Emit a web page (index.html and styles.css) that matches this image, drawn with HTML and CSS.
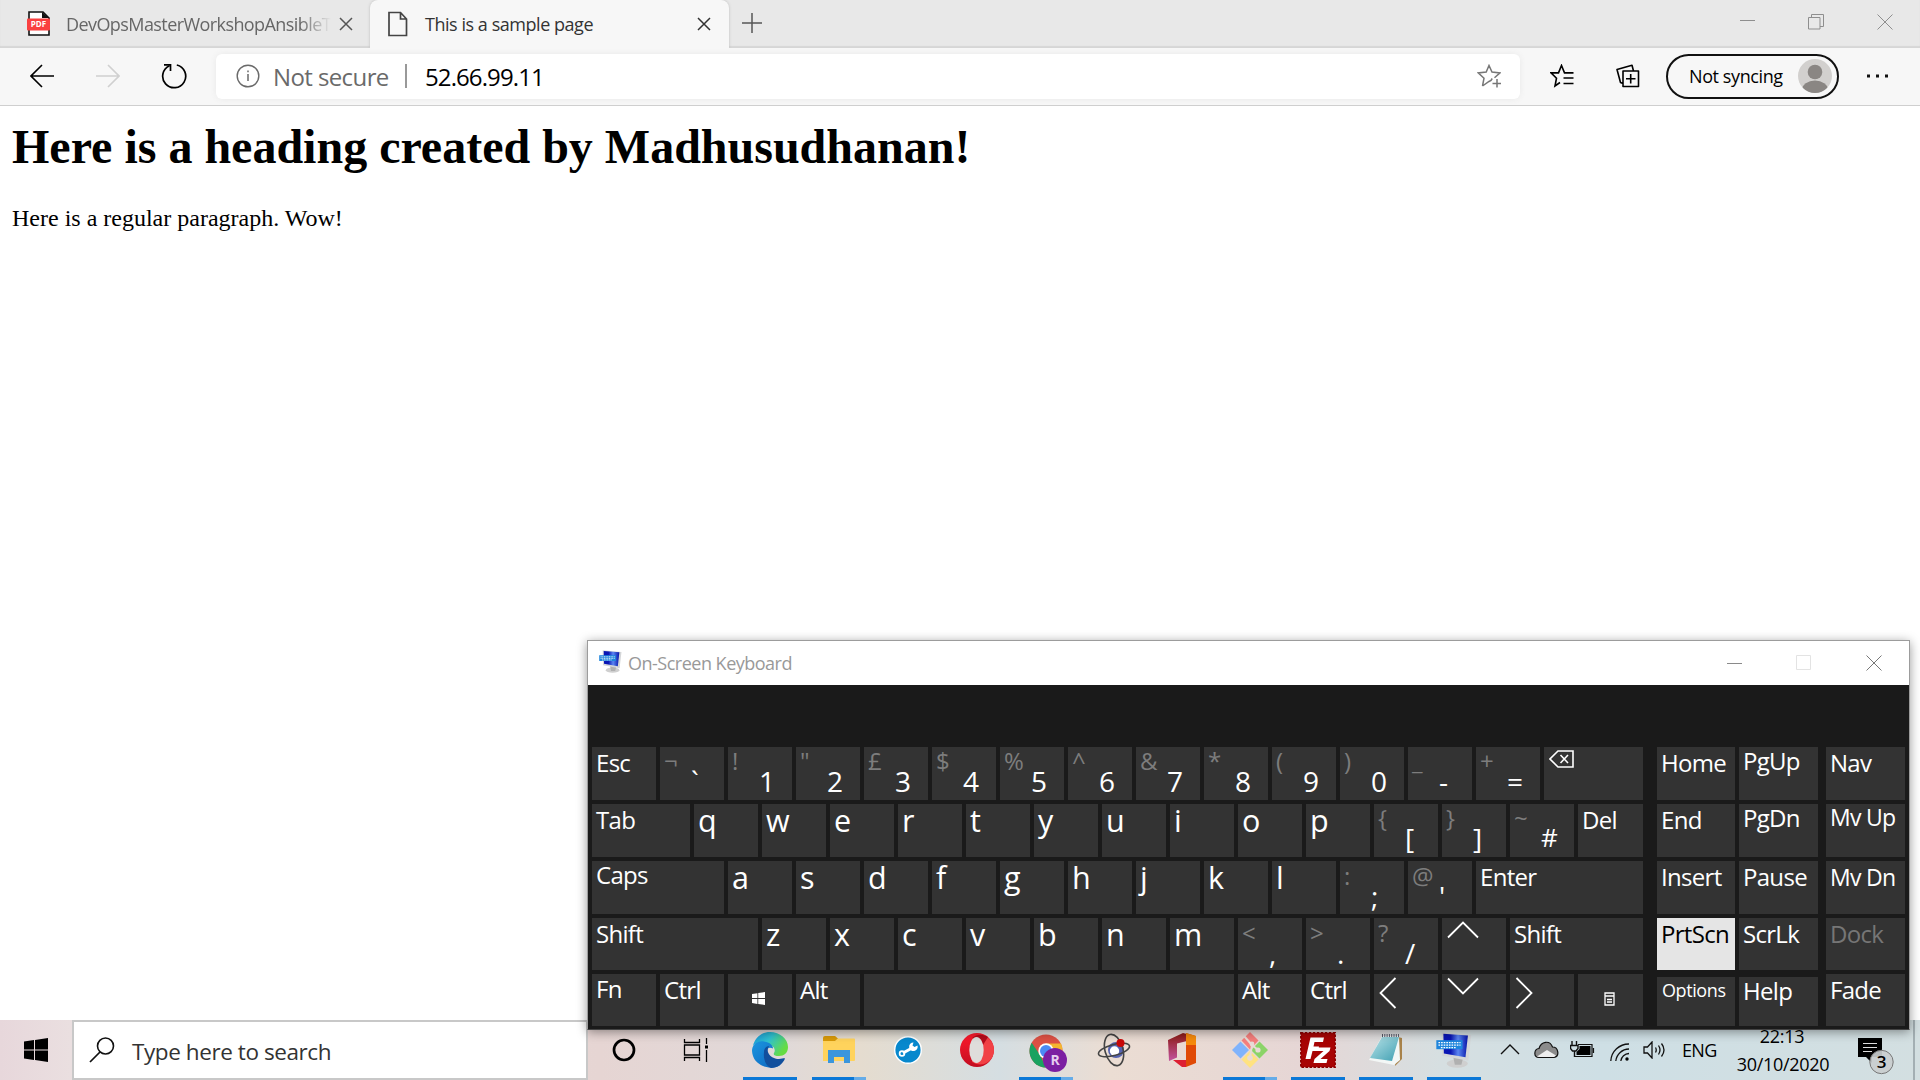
FILE: index.html
```html
<!DOCTYPE html>
<html lang="en">
<head>
<meta charset="utf-8">
<title>This is a sample page</title>
<link rel="stylesheet" href="styles.css">
</head>
<body>
<header class="tabs">
  <div class="tab tab-idle">
    <svg width="24" height="26" viewBox="0 0 24 26"><path d="M2 1h14l6 6v17H2z" fill="#fff" stroke="#111" stroke-width="1.6"/><path d="M15 1v6h7z" fill="#111"/><rect x="0" y="7.500" width="23" height="12" rx="1" fill="#fa4040"/><text x="11.500" y="16.400" text-anchor="middle" class="pdf">PDF</text></svg>
    <span class="tab-title fade">DevOpsMasterWorkshopAnsibleT</span>
    <svg class="x" width="14" height="14" viewBox="0 0 14 14"><path d="M1 1l12 12M13 1L1 13" stroke="#555" stroke-width="1.5"/></svg>
  </div>
  <div class="tab tab-active">
    <svg width="22" height="26" viewBox="0 0 22 26"><path d="M2 1.500h11.500l6 6.500v16.500H2zM13.500 1.500v6.500h6" fill="none" stroke="#444" stroke-width="1.700"/></svg>
    <span class="tab-title">This is a sample page</span>
    <svg class="x" width="14" height="14" viewBox="0 0 14 14"><path d="M1 1l12 12M13 1L1 13" stroke="#333" stroke-width="1.500"/></svg>
  </div>
  <svg class="plus" width="20" height="20" viewBox="0 0 20 20"><path d="M10 0v20M0 10h20" stroke="#555" stroke-width="1.500"/></svg>
  <div class="win-buttons">
    <svg width="15" height="15" viewBox="0 0 15 15"><path d="M0 6.500h15" stroke="#8e8e8e"/></svg>
    <svg width="16" height="16" viewBox="0 0 16 16"><path d="M.5 3.500h11.500v11.500H.5zM3.500 3.500V.5h12v12H12" fill="none" stroke="#8e8e8e"/></svg>
    <svg width="16" height="16" viewBox="0 0 16 16"><path d="M.5.5l15 15M15.500.5l-15 15" stroke="#8e8e8e"/></svg>
  </div>
</header>

<nav class="toolbar">
  <svg class="back" width="24" height="24" viewBox="0 0 24 24"><path d="M24 12H1M12 1L1 12l11 11" fill="none" stroke="#000" stroke-width="1.600"/></svg>
  <svg class="forward" width="24" height="24" viewBox="0 0 24 24"><path d="M0 12h23M12 1l11 11-11 11" fill="none" stroke="#d0d0d0" stroke-width="1.600"/></svg>
  <svg class="reload" width="26" height="26" viewBox="0 0 26 26"><path d="M15.800 2A11.500 11.500 0 1 1 8.500 2.700" fill="none" stroke="#000" stroke-width="1.700"/><path d="M3 1.800h6.500V8" fill="none" stroke="#000" stroke-width="1.700"/></svg>
  <div class="address">
    <svg width="24" height="24" viewBox="0 0 24 24"><circle cx="12" cy="12" r="10.800" fill="none" stroke="#6a6a6a" stroke-width="1.400"/><path d="M12 10v7M12 6.500v1.800" stroke="#6a6a6a" stroke-width="1.500"/></svg>
    <span class="insecure">Not secure</span>
    <span class="divider"></span>
    <span class="url">52.66.99.11</span>
    <svg class="star" width="24" height="24" viewBox="0 0 24 24"><path d="M5.500 22L7 14.200 1.200 8.900l8-.8L12 1.500l3 6.600 8 .8-5.500 4.900M15.200 14.500l-1.200 2-2 1-6.500 4.500M20 15v8.500M15.500 19.500H24" fill="none" stroke="#777" stroke-width="1.500"/></svg>
  </div>
  <svg class="favs" width="24" height="24" viewBox="0 0 24 24"><path d="M23.500 8.900H14.500L11.500 1.500 8.500 8.900H1l5.500 5.300L5 22l5-3.500M13.500 14H23.500M13.500 19.500H23.500" fill="none" stroke="#000" stroke-width="1.600"/></svg>
  <svg class="collections" width="24" height="24" viewBox="0 0 24 24"><path d="M7 7h15.500v15.500H7zM14.700 10v9.500M10 14.700h9.500M7 19.500L4.500 18.500 1 5.500 16 1.300 17.500 7" fill="none" stroke="#000" stroke-width="1.600" stroke-linejoin="round"/></svg>
  <div class="profile">
    <span>Not syncing</span>
    <svg width="34" height="34" viewBox="0 0 34 34"><defs><clipPath id="face"><circle cx="17" cy="17" r="17"/></clipPath></defs><g clip-path="url(#face)"><rect width="34" height="34" fill="#d2d0ce"/><circle cx="17" cy="13" r="7.300" fill="#8a8683"/><ellipse cx="17" cy="31" rx="13" ry="9.500" fill="#8a8683"/></g></svg>
  </div>
  <svg class="more" width="22" height="4" viewBox="0 0 22 4"><path d="M0 .5h3v3H0zM9 .5h3v3H9zM18 .5h3v3h-3z" fill="#111"/></svg>
</nav>

<main class="page">
  <h1>Here is a heading created by Madhusudhanan!</h1>
  <p>Here is a regular paragraph. Wow!</p>
</main>

<footer class="taskbar">
  <div class="start"><svg width="24" height="24" viewBox="0 0 24 24"><path d="M0 3.500L10 2.100v9.400H0zM11 1.900L24 0v11.500H11zM0 12.500h10v9.400L0 20.500zM11 12.500h13V24l-13-1.900z"/></svg></div>
  <div class="search">
    <svg width="26" height="26" viewBox="0 0 26 26"><circle cx="16.500" cy="9" r="8" fill="none" stroke="#111" stroke-width="1.600"/><path d="M11 15L1 25" stroke="#111" stroke-width="1.700"/></svg>
    <span>Type here to search</span>
  </div>
  <div class="slot cortana"><svg width="24" height="24" viewBox="0 0 24 24"><circle cx="12" cy="12" r="10" fill="none" stroke="#000" stroke-width="2.700"/></svg></div>
  <div class="slot view"><svg width="26" height="24" viewBox="0 0 26 24"><path d="M1.500 1v3.500h15V1M1.500 23v-3.500h15V23M1.500 7h15v10h-15zM23.500 0v6M23.500 12v12" fill="none" stroke="#000" stroke-width="1.300"/><path d="M22 7.500h3v3h-3z"/></svg></div>
  <div class="slot wide open"><svg width="36" height="36" viewBox="0 0 36 36"><defs><linearGradient id="eg" x1="0" y1="0" x2="1" y2=".5"><stop offset="0" stop-color="#1690d8"/><stop offset=".5" stop-color="#30c2d0"/><stop offset="1" stop-color="#65dc42"/></linearGradient><linearGradient id="eb" x1="0" y1="0" x2="1" y2="1"><stop offset="0" stop-color="#1b96df"/><stop offset="1" stop-color="#0c62be"/></linearGradient></defs><path d="M1 14C3 5 10 0 18 0c10 0 18 7 18 15 0 6-4 9-9 9-4 0-6-1-5-3 2-3 0-8-6-8C9 9 4 10 1 14z" fill="url(#eg)"/><path d="M0 18C1 11 7 8.500 12 9.500c6 1 9 4 9 7-7-3-7 4-4 9 3 5 8 7 12 7C22 38 12 36 6 31 2 28 0 23 0 18z" fill="url(#eb)"/><path d="M12 20c0-4 3-6 5-6-4 6 2 13 10 13 3 0 5-1 6-.5C31 32 25 36 19 36c-5-2-8-9-7-16z" fill="#114f9d"/></svg></div>
  <div class="slot wide open stacked"><svg width="32" height="28" viewBox="0 0 32 28"><path d="M0 2q0-2 2-2h10l3 2.500-3 3H0z" fill="#d99a08"/><path d="M0 5h12l3-2.500h16q1 0 1 1V24q0 1-1 1H0z" fill="#ffd35c"/><path d="M5 27V14h22v13h-6v-6H11v6z" fill="#3b96dc"/></svg></div>
  <div class="slot wide"><svg width="28" height="28" viewBox="0 0 28 28"><circle cx="14" cy="14" r="13.300" fill="#0788cd" stroke="#fff" stroke-width="1.400"/><path d="M9 17L19 11.500" stroke="#fff" stroke-width="3"/><circle cx="8" cy="17.500" r="2.400" fill="none" stroke="#fff" stroke-width="1.700"/><path d="M23.500 9.500A4.300 4.300 0 1 1 19.500 6.500L18.500 9.500l2 1.500z" fill="#fff"/></svg></div>
  <div class="slot wide"><svg width="34" height="34" viewBox="0 0 34 34"><defs><linearGradient id="op" x2="0" y2="1"><stop stop-color="#ff1b2d"/><stop offset="1" stop-color="#c20d20"/></linearGradient></defs><ellipse cx="17" cy="17" rx="17" ry="17" fill="url(#op)"/><path d="M12 5C24-2 34 7 34 17S24 36 12 29z" fill="#f14145"/><path d="M12 5C18 0 24 2 28 4L23 12z" fill="#b40b1b"/><ellipse cx="16.500" cy="17" rx="7.200" ry="13" fill="#dfdddb"/></svg></div>
  <div class="slot open stacked chrome"><svg width="38" height="38" viewBox="0 0 38 38"><circle cx="17" cy="17" r="16.500" fill="#dd5144"/><path d="M17 17h16.500A16.500 16.500 0 0 1 17 33.500z" fill="#ffcd46"/><path d="M17 9.500H32A16.500 16.500 0 0 1 33.500 17H17z" fill="#f4b530"/><path d="M2.700 8.800L11 21l6 12.500A16.500 16.500 0 0 1 2.700 8.800z" fill="#1aa260"/><circle cx="17" cy="17" r="7.700" fill="#fff"/><circle cx="17" cy="17" r="6" fill="#4c8bf5"/><circle cx="26" cy="26" r="12" fill="#7b1fa2"/><text x="26" y="31" text-anchor="middle" class="avatar">R</text></svg></div>
  <div class="slot"><svg width="34" height="34" viewBox="0 0 34 34"><circle cx="19" cy="17" r="8" fill="#5663b0"/><circle cx="17.500" cy="18" r="4.700" fill="#fff"/><g fill="none" stroke="#444" stroke-width="1.600"><ellipse cx="17" cy="17" rx="16" ry="5.500" transform="rotate(-15 17 17)"/><ellipse cx="17" cy="17" rx="16" ry="9" transform="rotate(75 17 17)"/></g><circle cx="23.500" cy="10" r="4" fill="#c90808"/></svg></div>
  <div class="slot"><svg width="28" height="34" viewBox="0 0 28 34"><defs><linearGradient id="of" x2="0" y2="1"><stop stop-color="#8c1b12"/><stop offset="1" stop-color="#c353a0"/></linearGradient></defs><path d="M0 7L15 0l4 1v7l-10 2.500v14L1 28z" fill="url(#of)"/><path d="M18 0l10 3v27l-10 4z" fill="#e04a06"/><path d="M18 0l10 3v9H18z" fill="#f58a0c"/><path d="M5 27h13v7L14 34z" fill="#dd2033"/></svg></div>
  <div class="slot open stacked"><svg width="36" height="36" viewBox="0 0 36 36"><path d="M18 0l8.500 8.500-8.500 9-8.500-9z" fill="#f57f7d"/><path d="M8.500 9.500L17 18l-8.500 8.500L0 18z" fill="#80b3fc"/><path d="M27.500 9.500L36 18l-8.500 8.500L19 18z" fill="#8bd468"/><path d="M18 19l8.500 8.500L18 36l-8.500-8.500z" fill="#ffe280"/><path d="M12 4l8 9 6 5M20 13l-2 13" stroke="#e8dbd6" stroke-width="2" fill="none"/><circle cx="20" cy="12" r="2.400" fill="#e8dbd6"/><circle cx="26" cy="18" r="2.600" fill="#e8dbd6"/><circle cx="18" cy="26" r="2.800" fill="#e8dbd6"/></svg></div>
  <div class="slot open"><svg width="36" height="36" viewBox="0 0 36 36"><rect x=".8" y=".8" width="34.400" height="34.400" fill="#a80404" stroke="#8c0000" stroke-width="1.500" stroke-dasharray="2.500 1.500"/><path d="M10.500 5.500H24l-1 4.500h-8.500l-1 4.500H19l-1 4.500h-5.500L10.500 27H5.500zM18 15.500h12.500L29.500 19l-9 8h7l-1 4H13.500l1-4 9-8H17z" fill="#fff"/></svg></div>
  <div class="slot open"><svg width="34" height="34" viewBox="0 0 34 34"><defs><linearGradient id="np" x2="1" y2="1"><stop stop-color="#b9e3e8"/><stop offset="1" stop-color="#3f9fb2"/></linearGradient></defs><path d="M29 4l4 1v21l-7 7z" fill="#a8824a"/><path d="M13 3h17l1 24-6 5-25-5z" fill="#f3f7f6"/><path d="M13 4h17l-7 24-22-3z" fill="url(#np)"/><path d="M13 2.500h17" stroke="#556" stroke-width="3" stroke-dasharray="1 1.300"/></svg></div>
  <div class="slot open"><svg width="36" height="36" viewBox="0 0 22 22"><use href="#osk"/></svg></div>
  <div class="tray">
    <svg class="t-up" width="20" height="11" viewBox="0 0 20 11"><path d="M1 10l9-9 9 9" fill="none" stroke="#111" stroke-width="1.400"/></svg>
    <svg class="t-cloud" width="25" height="18" viewBox="0 0 25 18"><path d="M5 16.500C-1 16 0 8 5 7.500 7 0 16-1 18.500 6c6 0 7.500 9.500 1.500 10.500z" fill="#8b8b8b" stroke="#111" stroke-width="1.200"/><path d="M3 15.500l10-6.500 9 5.500-2 1.500H5z" fill="#eee"/></svg>
    <svg class="t-battery" width="25" height="18" viewBox="0 0 25 18"><path d="M2 0v4M6.500 0v4M.5 4.500h7.500v3l-2 2.500H2.500L.5 7.500zM4.500 10v6" fill="none" stroke="#111" stroke-width="1.400"/><path d="M8 3.500h14v12H5M23.500 7v5" fill="none" stroke="#111" stroke-width="1.200"/><path d="M9.500 5h11v9H6.500v-3l3-3z"/></svg>
    <svg class="t-wifi" width="20" height="20" viewBox="0 0 20 20"><path d="M.8 19A18 18 0 0 1 19 2M5.800 19A13.500 13.500 0 0 1 19 7M10.800 19a8.500 8.500 0 0 1 8.200-7.500" fill="none" stroke="#111" stroke-width="1.300"/><circle cx="17" cy="17" r="1.700"/></svg>
    <svg class="t-sound" width="23" height="18" viewBox="0 0 23 18"><path d="M1 6h3.500L9 1v16l-4.500-5H1zM12.500 6.500q1.500 2.500 0 5M15.500 4.500q3 4.500 0 9M18.500 2.500q5 6.500 0 13" fill="none" stroke="#111" stroke-width="1.300"/></svg>
    <span class="lang">ENG</span>
    <div class="clock"><span class="time">22:13</span><span class="date">30/10/2020</span></div>
    <svg class="t-note" width="36" height="38" viewBox="0 0 36 38"><path d="M0 0h24v19H14v6l-6-6H0z"/><path d="M5 5.500h14M5 9.500h14M5 13.500h9" stroke="#ddd" stroke-width="1.200"/><circle cx="23.500" cy="24" r="11.700" fill="#c9cdce" fill-opacity=".92" stroke="#777"/><text x="23.500" y="30" text-anchor="middle" class="badge">3</text></svg>
  </div>
  <div class="peek"></div>
</footer>

<section class="osk">
  <div class="osk-title">
    <svg width="23" height="23" viewBox="0 0 22 22"><defs><linearGradient id="scr" x2="1" y2="0"><stop stop-color="#0a16b4"/><stop offset=".3" stop-color="#0a16b4"/><stop offset=".6" stop-color="#5b86f2"/><stop offset="1" stop-color="#0512a8"/></linearGradient></defs><g id="osk"><ellipse cx="13" cy="19.300" rx="6.500" ry="2.500" fill="#cfcfcf"/><path d="M10.500 15l6 1-1 4h-4z" fill="#b0b0b0"/><path d="M3.500.3L21.500 2l-1.800 15.500L3.800 14.500z" fill="#d4d6d8"/><path d="M4.500 1L19.500 2.200 18 15.500 4.800 13.200z" fill="url(#scr)"/><rect x=".2" y="5" width="16" height="5.500" fill="#1f86dd"/><path d="M1.500 6.500h13.500M1.500 8h13.500M3 9.500h9" stroke="#fff" stroke-width=".8" stroke-dasharray="1 .6"/></g></svg>
    <span>On-Screen Keyboard</span>
    <div class="osk-buttons">
      <svg width="15" height="16" viewBox="0 0 15 16"><path d="M0 8.500h15" stroke="#8a8a8a"/></svg>
      <svg width="15" height="15" viewBox="0 0 15 15"><path d="M.5.5h14v14H.5z" fill="none" stroke="#e3e3e3"/></svg>
      <svg width="16" height="16" viewBox="0 0 16 16"><path d="M.5.5l15 15M15.500.5l-15 15" stroke="#777"/></svg>
    </div>
  </div>
  <div class="osk-body">
    <div class="block">
      <div class="row">
        <div class="key">Esc</div>
        <div class="key dual"><i>¬</i><b>`</b></div>
        <div class="key dual"><i>!</i><b>1</b></div>
        <div class="key dual"><i>"</i><b>2</b></div>
        <div class="key dual"><i>£</i><b>3</b></div>
        <div class="key dual"><i>$</i><b>4</b></div>
        <div class="key dual"><i>%</i><b>5</b></div>
        <div class="key dual"><i>^</i><b>6</b></div>
        <div class="key dual"><i>&amp;</i><b>7</b></div>
        <div class="key dual"><i>*</i><b>8</b></div>
        <div class="key dual"><i>(</i><b>9</b></div>
        <div class="key dual"><i>)</i><b>0</b></div>
        <div class="key dual"><i>_</i><b>-</b></div>
        <div class="key dual"><i>+</i><b>=</b></div>
        <div class="key grow"><svg class="bksp" width="25" height="18" viewBox="0 0 25 18"><path d="M9 1h15v16H9L1 9z" fill="none" stroke="#fff" stroke-width="1.600"/><path d="M11.500 5l7.500 8M19 5l-7.500 8" stroke="#fff" stroke-width="1.600"/></svg></div>
      </div>
      <div class="row">
        <div class="key tab-key">Tab</div>
        <div class="key ltr">q</div><div class="key ltr">w</div><div class="key ltr">e</div><div class="key ltr">r</div><div class="key ltr">t</div><div class="key ltr">y</div><div class="key ltr">u</div><div class="key ltr">i</div><div class="key ltr">o</div><div class="key ltr">p</div>
        <div class="key dual"><i>{</i><b>[</b></div>
        <div class="key dual"><i>}</i><b>]</b></div>
        <div class="key dual"><i>~</i><b class="raised">#</b></div>
        <div class="key grow">Del</div>
      </div>
      <div class="row">
        <div class="key caps-key">Caps</div>
        <div class="key ltr">a</div><div class="key ltr">s</div><div class="key ltr">d</div><div class="key ltr">f</div><div class="key ltr">g</div><div class="key ltr">h</div><div class="key ltr">j</div><div class="key ltr">k</div><div class="key ltr">l</div>
        <div class="key dual lower"><i>:</i><b>;</b></div>
        <div class="key dual lower"><i>@</i><b>'</b></div>
        <div class="key grow low">Enter</div>
      </div>
      <div class="row short">
        <div class="key shift-key low">Shift</div>
        <div class="key ltr">z</div><div class="key ltr">x</div><div class="key ltr">c</div><div class="key ltr">v</div><div class="key ltr">b</div><div class="key ltr">n</div><div class="key ltr">m</div>
        <div class="key dual lower"><i>&lt;</i><b>,</b></div>
        <div class="key dual lower"><i>&gt;</i><b>.</b></div>
        <div class="key dual lower"><i>?</i><b>/</b></div>
        <div class="key"><svg class="arrow" width="32" height="20" viewBox="0 0 32 20"><path d="M1 16.500l15-15 15 15" fill="none" stroke="#fff" stroke-width="1.800"/></svg></div>
        <div class="key grow low">Shift</div>
      </div>
      <div class="row short">
        <div class="key high">Fn</div>
        <div class="key low">Ctrl</div>
        <div class="key center"><svg width="13" height="13" viewBox="0 0 24 24"><path fill="#fff" d="M0 3.500L10 2.100v9.200H0zM11.500 1.900L24 0v11.300H11.500zM0 12.800h10v9.200L0 20.500zM11.500 12.800H24V24l-12.500-1.900z"/></svg></div>
        <div class="key low">Alt</div>
        <div class="key grow"></div>
        <div class="key low">Alt</div>
        <div class="key low">Ctrl</div>
        <div class="key"><svg class="arrow" width="18" height="32" viewBox="0 0 18 32"><path d="M16.500 1l-15 15 15 15" fill="none" stroke="#fff" stroke-width="1.800"/></svg></div>
        <div class="key"><svg class="arrow" width="32" height="20" viewBox="0 0 32 20"><path d="M1 1.500l15 15 15-15" fill="none" stroke="#fff" stroke-width="1.800"/></svg></div>
        <div class="key"><svg class="arrow" width="18" height="32" viewBox="0 0 18 32"><path d="M1.500 1l15 15-15 15" fill="none" stroke="#fff" stroke-width="1.800"/></svg></div>
        <div class="key menu-key center"><svg width="11" height="14" viewBox="0 0 11 14"><path d="M1 1h9v12H1zM1 4h9M3 7.500h5M3 10h5" fill="none" stroke="#fff" stroke-width="1.300"/></svg></div>
      </div>
    </div>
    <div class="block nav">
      <div class="row"><div class="key">Home</div><div class="key up">PgUp</div></div>
      <div class="row"><div class="key">End</div><div class="key up">PgDn</div></div>
      <div class="row"><div class="key low">Insert</div><div class="key low">Pause</div></div>
      <div class="row short"><div class="key low pressed">PrtScn</div><div class="key low">ScrLk</div></div>
      <div class="row short inset"><div class="key small">Options</div><div class="key up">Help</div></div>
    </div>
    <div class="block side">
      <div class="row"><div class="key">Nav</div></div>
      <div class="row"><div class="key up mid">Mv Up</div></div>
      <div class="row"><div class="key low mid">Mv Dn</div></div>
      <div class="row short"><div class="key low dim">Dock</div></div>
      <div class="row short"><div class="key low">Fade</div></div>
    </div>
  </div>
</section>
</body>
</html>
```
FILE: styles.css
```css
* { box-sizing: border-box; }

body {
  margin: 0;
  width: 1920px;
  height: 1080px;
  overflow: hidden;
  position: relative;
  display: flex;
  flex-direction: column;
  background: #fff;
  font-family: "Open Sans", "Noto Sans", sans-serif;
  color: #000;
}

svg { display: block; flex: none; }

/* Browser tabs */
.tabs {
  display: flex;
  height: 48px;
  background: #e8e8e8;
  box-shadow: inset 0 -2px 1px #d6d6d6;
}
.tab { display: flex; align-items: center; height: 48px; font-size: 18px; }
.tab-idle { width: 370px; padding: 0 17px 0 27px; color: #666; }
.tab-active {
  width: 359px;
  padding: 0 18px 0 17px;
  background: #f7f7f7;
  border-radius: 8px 8px 0 0;
  box-shadow: 0 0 3px #bbb;
  clip-path: inset(0 -4px 0 -4px);
  color: #333;
}
.tab-title { margin-left: 15px; padding-bottom: 1px; white-space: nowrap; letter-spacing: -0.58px; }
.tab-active .tab-title { margin-left: 16px; letter-spacing: -0.46px; }
.fade { -webkit-mask-image: linear-gradient(90deg, #000 88%, transparent); mask-image: linear-gradient(90deg, #000 88%, transparent); }
.x { margin-left: auto; }
.plus { margin: 13px 0 0 13px; }
.win-buttons { display: flex; gap: 53px; margin: 14px 27px 0 auto; }

/* Toolbar */
.toolbar {
  display: flex;
  align-items: center;
  height: 58px;
  padding-bottom: 1px;
  background: #f7f7f7;
  border-bottom: 1px solid #cfcfcf;
}
.back { margin-left: 30px; }
.forward { margin-left: 42px; }
.reload { margin-left: 41px; }
.address {
  display: flex;
  align-items: center;
  width: 1304px;
  height: 45px;
  margin-left: 29px;
  padding: 0 19px 0 20px;
  background: #fff;
  border-radius: 6px;
  box-shadow: 0 0 6px #e9e9e9;
  font-size: 24px;
}
.insecure { width: 115px; margin-left: 13px; color: #6a6a6a; letter-spacing: -0.6px; white-space: nowrap; }
.divider { width: 2px; height: 24px; margin: 0 18px 0 17px; background: #999; }
.url { letter-spacing: -0.9px; }
.insecure, .url { padding-top: 1px; }
.star { margin-left: auto; }
.favs { margin-left: 30px; }
.collections { margin-left: 42px; }
.profile {
  display: flex;
  align-items: center;
  justify-content: space-between;
  width: 173px;
  height: 45px;
  margin-left: 26px;
  padding: 0 5px 0 21px;
  border: 2px solid #111;
  border-radius: 23px;
  font-size: 18px;
  letter-spacing: -0.4px;
}
.profile span { padding-bottom: 1px; }
.more { margin-left: 28px; }

/* Page content */
.page { flex: 1; padding: 13px 12px 0; font-family: "Liberation Serif", serif; }
.page h1 { margin: 0; font-size: 48px; line-height: 55px; white-space: nowrap; }
.page p { margin: 30px 0 0; font-size: 24px; line-height: 28px; }

/* Taskbar */
.taskbar {
  display: flex;
  height: 60px;
  background: linear-gradient(90deg, #e7d7db 0, #eadfe0 70px, #e6d5d3 600px, #e0d9d9 780px, #e5dccf 860px, #d5dee2 1000px, #ebddd3 1110px, #e6d6d5 1300px, #d6dfe1 1440px, #cedfe5 1600px, #d3dfe1 1920px);
}
.start { width: 72px; padding: 18px 0 0 24px; }
.search {
  display: flex;
  width: 516px;
  padding: 15px 0 0 15px;
  background: #fff;
  border: 2px solid #c8c8c8;
  font-size: 22.5px;
  letter-spacing: -0.42px;
  color: #333;
}
.search span { margin-left: 17px; line-height: 30px; }
.slot { position: relative; width: 68px; display: flex; align-items: center; justify-content: center; }
.slot svg { margin-right: 1px; }
.wide { width: 69px; }
.cortana { width: 72px; }
.view { width: 76px; padding-right: 3px; }
.open::after { content: ""; position: absolute; left: 7px; bottom: 0; width: 54px; height: 3px; background: #0b78d7; }
.stacked::after { background: linear-gradient(90deg, #0b78d7 78%, #65ace8 78%); }
.chrome { padding: 5px 0 0 4px; }
.tray { display: flex; width: 425px; }
.t-up { margin: 24px 0 0 12px; }
.t-cloud { margin: 21px 0 0 14px; }
.t-battery { margin: 21px 0 0 11px; }
.t-wifi { margin: 22px 0 0 15px; }
.t-sound { margin: 21px 0 0 13px; }
.lang { width: 40px; margin: 15px 0 0 16px; font-size: 18px; line-height: 30px; letter-spacing: -0.7px; }
.clock { display: flex; flex-direction: column; align-items: center; width: 110px; margin-left: 6px; font-size: 18px; line-height: 28px; letter-spacing: -0.3px; padding-top: 2px; }
.time { margin-right: 2px; }
.t-note { margin: 18px 0 0 20px; }
.peek { width: 7px; margin-left: auto; border-left: 2px solid #a3afb3; }

/* On-screen keyboard window */
.osk {
  position: absolute;
  left: 587px;
  top: 640px;
  width: 1323px;
  height: 390px;
  border: 1px solid #9c9c9c;
  border-bottom-color: #444;
  background: #1a1a1a;
  box-shadow: 0 2px 10px rgba(0, 0, 0, .4);
}
.osk-title {
  display: flex;
  align-items: center;
  height: 44px;
  padding: 0 27px 0 11px;
  background: #fff;
  font-size: 18px;
  letter-spacing: -0.5px;
  color: #999;
}
.osk-title > svg { margin-bottom: 3px; }
.osk-title > span { margin-left: 6px; }
.osk-buttons { display: flex; gap: 55px; margin-left: auto; padding-bottom: 1px; }
.osk-buttons svg:first-child { margin-right: -1px; }
.osk-body { display: flex; padding: 62px 4px 0; }
.block { display: flex; flex-direction: column; gap: 4px; width: 1051px; }
.nav { width: 161px; margin-left: 14px; }
.side { width: 79px; margin-left: 8px; }
.row { display: flex; gap: 4px; height: 53px; }
.short { height: 52px; }
.key {
  width: 64px;
  padding-left: 4px;
  background: #333;
  color: #fff;
  font-size: 24px;
  line-height: 31px;
  letter-spacing: -0.7px;
  white-space: nowrap;
}
.grow { flex: 1; }
.tab-key { width: 98px; }
.caps-key { width: 132px; line-height: 28px; }
.shift-key { width: 166px; }
.menu-key { width: 65px; }
.ltr { font-size: 30.5px; line-height: 33px; }
.low { line-height: 32px; }
.high { line-height: 29px; }
.dual { display: flex; }
.dual i { width: 27px; font-style: normal; line-height: 27px; color: #7d7d7d; }
.dual b { font-weight: 400; font-size: 28px; line-height: 28px; margin-top: 20px; }
.dual .raised { font-size: 26px; margin-top: 19px; }
.lower i { line-height: 29px; }
.lower b { margin-top: 21px; }
.center { display: flex; align-items: center; justify-content: center; padding: 0 3px 3px 0; }
.arrow { margin: 3px 0 0 1px; }
.bksp { margin: 3px 0 0 1px; }
.nav .key, .side .key { flex: 1; }
.nav .key:first-child { flex: 0 0 78px; }
.key.up { line-height: 27px; }
.mid { font-size: 23px; }
.inset { padding-top: 3px; }
.key.small { padding-left: 5px; font-size: 18px; line-height: 27px; letter-spacing: -0.4px; }
.pressed { background: #e5e5e5; color: #000; }
.dim { color: #767676; }

.pdf { font: 700 8px "Open Sans", sans-serif; fill: #fff; }
.avatar { font: 700 14px "Open Sans", sans-serif; fill: #e6cdf0; }
.badge { font: 600 17px "Open Sans", sans-serif; fill: #000; }
```
